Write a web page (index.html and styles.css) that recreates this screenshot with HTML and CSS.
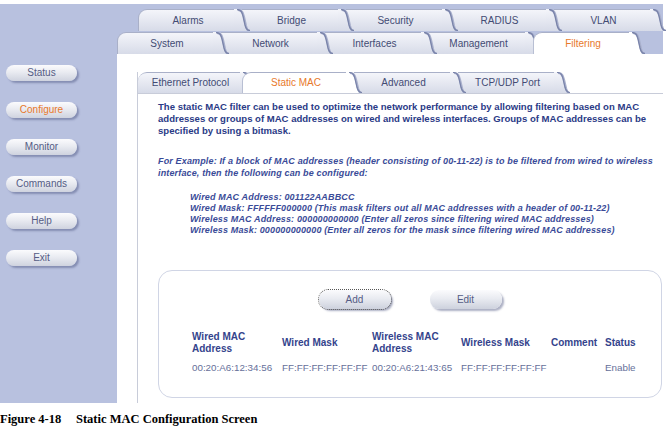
FILE: index.html
```html
<!DOCTYPE html>
<html lang="en">
<head>
  <meta charset="UTF-8" />
  <title>Static MAC Configuration</title>
  <link rel="stylesheet" href="styles.css">
</head>
<body>

<svg class="defs" width="0" height="0" aria-hidden="true">
  <defs>
    <linearGradient id="tabfill" x1="0" y1="0" x2="0" y2="1">
      <stop offset="0" stop-color="#f4f5fa"/>
      <stop offset="1" stop-color="#d7dbe8"/>
    </linearGradient>
    <symbol id="curve" viewBox="0 0 16 22" preserveAspectRatio="none">
      <path d="M0 0 H3 C7 0 8 3 9 7 L11 16 C12 20 13 22 16 22 H0 Z"/>
      <path d="M4 1 C8 1 9 4 10 8 L12 17 C13 21 14 22.5 16 22.5" fill="none" stroke="#a9b0cc" stroke-width="2.2"/>
      <path d="M3 0.5 C7 0.5 8 3 9 7 L11 16 C12 20 13 21.5 16 21.5" fill="none" stroke="#7a84aa" stroke-width="1.3"/>
    </symbol>
  </defs>
</svg>

<div class="screen">
  <aside class="sidebar">
    <div class="nav-btn">Status</div>
    <div class="nav-btn active">Configure</div>
    <div class="nav-btn">Monitor</div>
    <div class="nav-btn">Commands</div>
    <div class="nav-btn">Help</div>
    <div class="nav-btn">Exit</div>
  </aside>

  <div class="main">
    <div class="tabs-top">
      <div class="tab-row row1">
        <div class="tab first"><span class="label">Alarms</span><svg><use href="#curve"/></svg></div>
        <div class="tab"><span class="label">Bridge</span><svg><use href="#curve"/></svg></div>
        <div class="tab"><span class="label">Security</span><svg><use href="#curve"/></svg></div>
        <div class="tab"><span class="label">RADIUS</span><svg><use href="#curve"/></svg></div>
        <div class="tab"><span class="label">VLAN</span><svg><use href="#curve"/></svg></div>
      </div>
      <div class="tab-row row2">
        <div class="tab first"><span class="label">System</span><svg><use href="#curve"/></svg></div>
        <div class="tab"><span class="label">Network</span><svg><use href="#curve"/></svg></div>
        <div class="tab"><span class="label">Interfaces</span><svg><use href="#curve"/></svg></div>
        <div class="tab"><span class="label">Management</span><svg><use href="#curve"/></svg></div>
        <div class="tab on"><span class="label">Filtering</span><svg><use href="#curve"/></svg></div>
      </div>
    </div>

    <div class="content">
      <div class="panel">
        <div class="tab-row subtabs">
          <div class="tab first"><span class="label">Ethernet Protocol</span><svg><use href="#curve"/></svg></div>
          <div class="tab on"><span class="label">Static MAC</span><svg><use href="#curve"/></svg></div>
          <div class="tab"><span class="label">Advanced</span><svg><use href="#curve"/></svg></div>
          <div class="tab"><span class="label">TCP/UDP Port</span><svg><use href="#curve"/></svg></div>
        </div>

        <div class="panel-body">
          <p class="intro">The static MAC filter can be used to optimize the network performance by allowing filtering based on MAC<br>
            addresses or groups of MAC addresses on wired and wireless interfaces. Groups of MAC addresses can be<br>
            specified by using a bitmask.</p>

          <p class="example">For Example: If a block of MAC addresses (header consisting of 00-11-22) is to be filtered from wired to wireless<br>
            interface, then the following can be configured:</p>

          <p class="sample">Wired MAC Address: 001122AABBCC<br>
            Wired Mask: FFFFFF000000 (This mask filters out all MAC addresses with a header of 00-11-22)<br>
            Wireless MAC Address: 000000000000 (Enter all zeros since filtering wired MAC addresses)<br>
            Wireless Mask: 000000000000 (Enter all zeros for the mask since filtering wired MAC addresses)</p>

          <div class="filter-box">
            <div class="box-actions">
              <button class="pill focused">Add</button>
              <button class="pill">Edit</button>
            </div>
            <table class="mac-table">
              <thead>
                <tr>
                  <th class="c1">Wired MAC<br>Address</th>
                  <th class="c2">Wired Mask</th>
                  <th class="c3">Wireless MAC<br>Address</th>
                  <th class="c4">Wireless Mask</th>
                  <th class="c5">Comment</th>
                  <th>Status</th>
                </tr>
              </thead>
              <tbody>
                <tr>
                  <td>00:20:A6:12:34:56</td>
                  <td>FF:FF:FF:FF:FF:FF</td>
                  <td>00:20:A6:21:43:65</td>
                  <td>FF:FF:FF:FF:FF:FF</td>
                  <td></td>
                  <td>Enable</td>
                </tr>
              </tbody>
            </table>
          </div>
        </div>
      </div>
    </div>
  </div>
</div>

<p class="caption"><span class="fig-no">Figure 4-18</span>Static MAC Configuration Screen</p>

</body>
</html>
```

FILE: styles.css
```css
body {
  margin: 0;
  background: #fff;
  font-family: "Liberation Sans", Arial, sans-serif;
}
.defs {
  position: absolute;
  width: 0;
  height: 0;
}
.screen {
  margin-top: 4px;
  width: 663px;
  height: 399px;
  display: flex;
}

/* left navigation */
.sidebar {
  width: 117px;
  background: #b8c1df;
  display: flex;
  flex-direction: column;
  gap: 21px;
  padding: 61px 0 0 6px;
  box-sizing: border-box;
}
.nav-btn {
  width: 71px;
  height: 16px;
  line-height: 16px;
  text-align: center;
  font-size: 10px;
  color: #555c85;
  border-radius: 8px;
  background: linear-gradient(#fbfbfd, #e9ebf1 45%, #cfd3df);
  box-shadow: 2px 2px 2px rgba(70, 80, 125, 0.45);
}
.nav-btn.active {
  color: #e8792b;
}

/* main area */
.main {
  flex: 1;
  display: flex;
  flex-direction: column;
}
.tabs-top {
  height: 50px;
  background: #b8c1df;
  padding-top: 5px;
  box-sizing: border-box;
}
.tab-row {
  display: flex;
  height: 22px;
}
.row1 {
  padding-left: 21px;
}
.row2 {
  margin-top: 1px;
}
.tab {
  display: flex;
  position: relative;
  margin-right: -8px;
  fill: url(#tabfill);
}
.tab:nth-child(1) { z-index: 6; }
.tab:nth-child(2) { z-index: 5; }
.tab:nth-child(3) { z-index: 4; }
.tab:nth-child(4) { z-index: 3; }
.tab:nth-child(5) { z-index: 2; }
.tab .label {
  width: 96px;
  box-sizing: border-box;
  padding-left: 3px;
  text-align: center;
  font-size: 10px;
  line-height: 21px;
  color: #434b73;
  background: linear-gradient(#f4f5fa, #d7dbe8);
  border-top: 1px solid #a9b0c8;
}
.tab svg {
  width: 16px;
  height: 22px;
  overflow: visible;
}
.tab.first .label {
  border-left: 1px solid #a9b0c8;
  border-top-left-radius: 9px;
}
.tab.on {
  z-index: 10;
  fill: #fff;
}
.tab.on .label {
  background: #fff;
  color: #e8792b;
  border-left: 1px solid #b8bfd3;
  border-top-left-radius: 9px;
}

/* content */
.content {
  flex: 1;
  background: #fff;
  padding: 18px 0 0 20px;
  display: flex;
}
.panel {
  flex: 1;
  border-left: 1px solid #c8ccd9;
  display: flex;
  flex-direction: column;
}
.subtabs {
  height: 21px;
}
.subtabs svg {
  height: 21px;
}
.subtabs .tab .label {
  line-height: 20px;
}
.subtabs .tab.first .label {
  width: 102px;
  border-left: none;
}
.subtabs .tab.on {
  margin-left: -6px;
}
.subtabs .tab.on .label {
  width: 104px;
}
.panel-body {
  flex: 1;
  border-top: 1px solid #c8ccd9;
  padding: 7px 1px 0 20px;
}
.intro {
  margin: 0;
  font-size: 9.55px;
  font-weight: bold;
  line-height: 12px;
  color: #2a3a86;
  white-space: nowrap;
}
.example {
  margin: 18px 0 0;
  font-size: 9px;
  font-weight: bold;
  font-style: italic;
  line-height: 12px;
  letter-spacing: 0.15px;
  color: #3a4b98;
  white-space: nowrap;
}
.sample {
  margin: 13px 0 0 32px;
  font-size: 9px;
  font-weight: bold;
  font-style: italic;
  line-height: 11px;
  letter-spacing: 0.15px;
  color: #3a4b98;
  white-space: nowrap;
}

/* filter table box */
.filter-box {
  margin-top: 34px;
  height: 128px;
  border: 1px solid #d0d5e5;
  border-radius: 14px;
  padding-top: 19px;
  box-sizing: border-box;
}
.box-actions {
  display: flex;
  justify-content: center;
  gap: 39px;
}
.pill {
  width: 72px;
  height: 19px;
  padding: 0;
  border: none;
  border-radius: 9px;
  font-family: "Liberation Sans", Arial, sans-serif;
  font-size: 10px;
  color: #555c85;
  background: linear-gradient(#fbfbfd, #e9ebf1 45%, #cdd1dd);
  box-shadow: 2px 2px 2px rgba(70, 80, 125, 0.45);
}
.pill.focused {
  outline: 1px dotted #555;
  outline-offset: 0;
}
.mac-table {
  margin: 22px 0 0 33px;
  border-collapse: collapse;
  font-size: 10px;
}
.mac-table th,
.mac-table td {
  padding: 0;
  text-align: left;
}
.mac-table th {
  color: #34438c;
  line-height: 12px;
  vertical-align: middle;
}
.mac-table td {
  color: #66709a;
  padding-top: 7px;
  font-size: 9.8px;
}
.c1, .c2, .c4 { width: 90px; }
.c3 { width: 89px; }
.c5 { width: 54px; }

/* caption */
.caption {
  margin: 9px 0 0;
  font-family: "Liberation Serif", "Times New Roman", serif;
  font-weight: bold;
  font-size: 12.5px;
}
.fig-no {
  display: inline-block;
  width: 76px;
}
```
